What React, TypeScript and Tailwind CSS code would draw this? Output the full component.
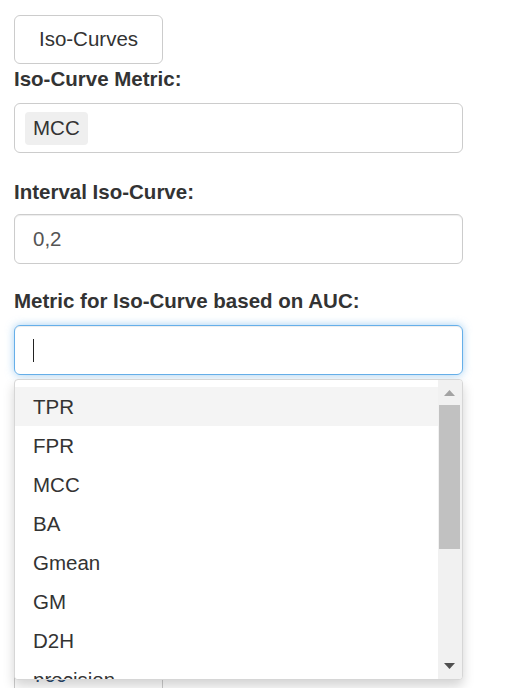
import React from "react";

const items = ["TPR", "FPR", "MCC", "BA", "Gmean", "GM", "D2H", "precision"];

export default function App() {
  return (
    <div
      className="w-[507px] h-[688px] overflow-hidden bg-white text-[#333]"
      style={{ fontFamily: '"Liberation Sans", Arial, sans-serif' }}
    >
      <div className="pl-[14px] pt-[15px] w-[463px]">
        <button className="h-[49px] w-[149px] border border-[#ccc] rounded-[6px] bg-white text-[20.5px] text-[#333] flex items-center justify-center">
          Iso-Curves
        </button>

        <div className="h-[30px] leading-[30px] font-bold text-[20.5px] mb-[9px]">
          Iso-Curve Metric:
        </div>
        <div className="h-[50px] border border-[#ccc] rounded-[6px] flex items-center pl-[10px]">
          <span className="h-[33px] px-[8px] rounded-[4px] bg-[#efefef] flex items-center text-[20.5px] text-[#333]">
            MCC
          </span>
        </div>

        <div className="mt-[24px] h-[30px] leading-[30px] font-bold text-[20.5px] mb-[7px]">
          Interval Iso-Curve:
        </div>
        <div className="h-[50px] border border-[#ccc] rounded-[6px] flex items-center pl-[18px] text-[20.5px] text-[#555] shadow-[inset_0_1px_1px_rgba(0,0,0,0.075)]">
          0,2
        </div>

        <div className="mt-[22px] h-[30px] leading-[30px] font-bold text-[20.5px] mb-[9px]">
          Metric for Iso-Curve based on AUC:
        </div>
        <div className="relative">
          <div className="h-[50px] border border-[#66afe9] rounded-[6px] flex items-center pl-[18px] shadow-[inset_0_1px_1px_rgba(0,0,0,0.075),0_0_8px_rgba(102,175,233,0.6)]">
            <span className="block w-[1px] h-[23px] bg-[#222]" />
          </div>

          <div className="absolute z-10 left-0 top-[54px] w-[449px] h-[301px] bg-white border border-[#d6d6d6] rounded-[4px] shadow-[0_6px_12px_rgba(0,0,0,0.175)] overflow-hidden flex">
            <div className="flex-1 pt-[7px] overflow-hidden">
              {items.map((it, i) => (
                <div
                  key={it}
                  className={
                    "h-[39px] leading-[39px] pl-[18px] text-[20.5px] text-[#333] " +
                    (i === 0 ? "bg-[#f4f4f4]" : "bg-white")
                  }
                >
                  {it}
                </div>
              ))}
            </div>
            <div className="w-[24px] bg-[#f1f1f1] flex flex-col items-center pr-[1px]">
              <div className="h-[25px] flex items-center justify-center">
                <svg width="11" height="6" viewBox="0 0 11 6">
                  <polygon points="5.5,0 11,6 0,6" fill="#a3a3a3" />
                </svg>
              </div>
              <div className="w-[21px] h-[144px] bg-[#c1c1c1]" />
              <div className="flex-1" />
              <div className="h-[26px] flex items-center justify-center">
                <svg width="11" height="6" viewBox="0 0 11 6">
                  <polygon points="0,0 11,0 5.5,6" fill="#505050" />
                </svg>
              </div>
            </div>
          </div>
        </div>

        <div className="mt-[275px] h-[50px] w-[149px] border border-[#ccc] rounded-[6px] flex items-center pl-[18px] text-[20.5px] text-[#2b4a70]">
          700
        </div>
      </div>
    </div>
  );
}
